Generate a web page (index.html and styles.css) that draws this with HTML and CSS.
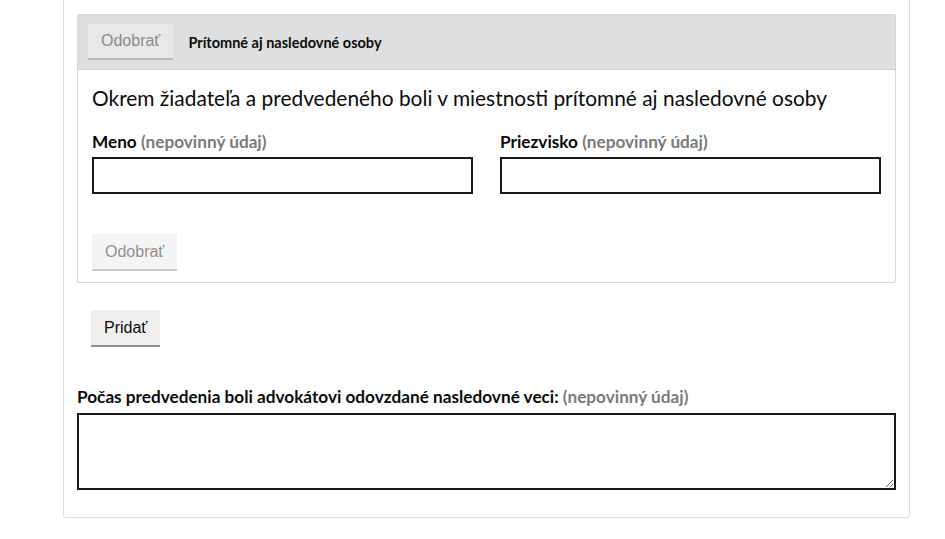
FILE: index.html
```html
<!DOCTYPE html>
<html lang="sk">
<head>
  <meta charset="UTF-8" />
  <meta name="viewport" content="width=device-width, initial-scale=1.0"/>
  <title>Prítomné osoby</title>
  <link rel="stylesheet" href="styles.css">
</head>
<body>
  <div class="card">
    <div class="panel">
      <div class="panel-head">
        <button class="btn btn-muted" type="button">Odobrať</button>
        <span class="panel-title">Prítomné aj nasledovné osoby</span>
      </div>
      <div class="panel-body">
        <p class="lead">Okrem žiadateľa a predvedeného boli v miestnosti prítomné aj nasledovné osoby</p>
        <div class="row">
          <div class="field">
            <label for="meno">Meno <span class="opt">(nepovinný údaj)</span></label>
            <input type="text" id="meno" />
          </div>
          <div class="field">
            <label for="priezvisko">Priezvisko <span class="opt">(nepovinný údaj)</span></label>
            <input type="text" id="priezvisko" />
          </div>
        </div>
        <button class="btn btn-muted btn-remove" type="button">Odobrať</button>
      </div>
    </div>

    <button class="btn btn-add" type="button">Pridať</button>

    <div class="field field-wide">
      <label for="veci">Počas predvedenia boli advokátovi odovzdané nasledovné veci: <span class="opt">(nepovinný údaj)</span></label>
      <textarea id="veci"></textarea>
    </div>
  </div>
</body>
</html>
```

FILE: styles.css
```css
body { margin: 0; font-family: "Source Sans Pro", Lato, "Noto Sans", sans-serif; color: #0b0c0c; background: #fff; }
.card { box-sizing: border-box; margin-left: 63px; width: 847px; border: 1px solid #dedede; border-top: 0; border-radius: 0 0 3px 3px; padding: 14px 13px 27px 13px; }
.panel { border: 1px solid #d6d6d6; border-radius: 2px; }
.panel-head { display: flex; align-items: center; gap: 15px; height: 54px; padding: 0 10px; background: #dedfe0; border-bottom: 1px solid #cfcfcf; }
.panel-title { font-size: 14.5px; font-weight: 700; }
.panel-body { padding: 14px 14px 11px 14px; }
.lead { margin: 0 0 19px; font-size: 20.9px; line-height: 28px; }
.row { display: flex; gap: 27px; }
.field { flex: 1; display: flex; flex-direction: column; }
label { font-size: 17.2px; font-weight: 700; line-height: 22px; margin-bottom: 4px; }
.opt { color: #7b7b7b; }
input, textarea { box-sizing: border-box; border: 2px solid #1a1a1a; margin: 0; font: inherit; }
input { height: 37px; }
textarea { height: 77px; resize: vertical; }
.btn { font-family: "Liberation Sans", Arial, sans-serif; font-size: 16px; border: 0; border-bottom: 2px solid #a6a6a6; border-radius: 0; padding: 0 13px; height: 36px; cursor: pointer; }
.btn-muted { background: #ebebeb; color: #8a8a8a; border-bottom-color: #b8b8b8; }
.panel-head .btn-muted { background: #e8e8e8; }
.btn-remove { margin-top: 40px; height: 37px; background: #f4f4f4; color: #8f8f8f; border-bottom-color: #c9c9c9; }
.btn-add { margin: 27px 0 0 14px; height: 37px; background: #efefef; color: #0b0c0c; border-bottom-color: #8c8c8c; }
.field-wide { margin-top: 39px; }
.field-wide label { margin-bottom: 5px; }
```
